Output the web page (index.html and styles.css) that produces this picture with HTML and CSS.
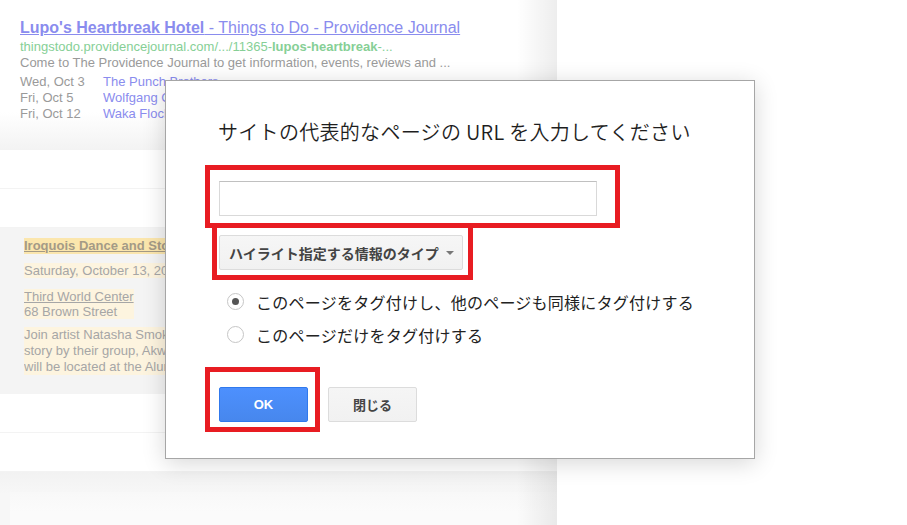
FILE: index.html
```html
<!DOCTYPE html>
<html lang="ja">
<head>
<meta charset="utf-8">
<title>URL</title>
<link rel="stylesheet" href="styles.css">
</head>
<body>
<div class="page">
  <div class="column">
    <div class="result">
      <a class="result-title"><b>Lupo's Heartbreak Hotel</b> - Things to Do - Providence Journal</a>
      <div class="result-url">thingstodo.providencejournal.com/.../11365-<b>lupos-heartbreak</b>-...</div>
      <div class="result-snippet">Come to The Providence Journal to get information, events, reviews and ...</div>
      <div class="events">
        <div class="ev"><span class="ev-date">Wed, Oct 3</span><a class="ev-name">The Punch Brothers</a></div>
        <div class="ev"><span class="ev-date">Fri, Oct 5</span><a class="ev-name ev-clip">Wolfgang Gartner</a></div>
        <div class="ev"><span class="ev-date">Fri, Oct 12</span><a class="ev-name ev-clip">Waka Flocka</a></div>
      </div>
    </div>
    <div class="blank"></div>
    <div class="blank"></div>
    <div class="event-card">
      <div class="clip"><span class="hl hl-strong ev-title">Iroquois Dance and Story</span></div>
      <div class="clip ev-line"><span class="hl">Saturday, October 13, 2012</span></div>
      <div class="clip ev-addr"><span class="hl"><u>Third World Center</u><br>68 Brown Street</span></div>
      <div class="clip ev-para"><span class="hl hl-block">Join artist Natasha Smoke<br>story by their group, Akwesasne<br>will be located at the Alumnae</span></div>
    </div>
    <div class="blank"></div>
    <div class="blank"></div>
    <div class="footer"><div class="footer-card"></div></div>
  </div>
</div>

<div class="dialog">
  <h1 class="dialog-title">サイトの代表的なページの URL を入力してください</h1>
  <div class="mark mark-input">
    <input class="url-input" type="text">
  </div>
  <div class="mark mark-select">
    <button class="select" type="button">ハイライト指定する情報のタイプ<span class="caret"></span></button>
  </div>
  <div class="options">
    <label class="option"><span class="radio checked"></span>このページをタグ付けし、他のページも同様にタグ付けする</label>
    <label class="option"><span class="radio"></span>このページだけをタグ付けする</label>
  </div>
  <div class="actions">
    <div class="mark mark-ok"><button class="btn btn-ok" type="button">OK</button></div>
    <button class="btn btn-close" type="button">閉じる</button>
  </div>
</div>
</body>
</html>
```
FILE: styles.css
```css
html, body {
  margin: 0;
  padding: 0;
  background: #fff;
}
body {
  position: relative;
  width: 907px;
  height: 525px;
  overflow: hidden;
  font-family: "Liberation Sans", Arial, sans-serif;
}

.page {
  display: flex;
}
.column {
  position: relative;
  width: 557px;
  height: 525px;
  display: flex;
  flex-direction: column;
}
.column::after {
  content: "";
  position: absolute;
  top: 0;
  right: 0;
  bottom: 0;
  width: 40px;
  background: linear-gradient(to right, rgba(0,0,0,0), rgba(0,0,0,0.07));
  pointer-events: none;
}

.result {
  height: 150px;
  box-sizing: border-box;
  padding: 18px 0 0 20px;
  background: linear-gradient(to bottom, #fff 0, #fff 112px, #f3f3f3 150px);
}
.result-title {
  display: block;
  font-size: 16px;
  line-height: 19px;
  color: #8a8cee;
  text-decoration: underline;
  white-space: nowrap;
}
.result-url {
  margin-top: 2px;
  font-size: 13px;
  line-height: 16px;
  color: #86cf96;
  white-space: nowrap;
}
.result-snippet {
  font-size: 13px;
  line-height: 16px;
  color: #9a9a9a;
  white-space: nowrap;
}
.events {
  margin-top: 3px;
}
.ev {
  display: flex;
  font-size: 13px;
  line-height: 16px;
  white-space: nowrap;
}
.ev-date {
  width: 83px;
  color: #9a9a9a;
}
.ev-name {
  color: #8a8cee;
}
.ev-clip {
  display: block;
  max-width: 62px;
  overflow: hidden;
}

.blank {
  height: 38px;
  border-bottom: 1px solid #f3f3f3;
  background: #fff;
}

.event-card {
  height: 166px;
  box-sizing: border-box;
  padding: 10px 0 0 24px;
  background: #f4f4f4;
  font-size: 13px;
  color: #a6a6a6;
  white-space: nowrap;
}
.clip {
  max-width: 141px;
  overflow: hidden;
}
.hl {
  display: inline-block;
  vertical-align: top;
  background: #fdf4df;
  line-height: 15px;
}
.hl-strong {
  background: #fbe6ad;
  line-height: 16px;
}
.ev-title {
  font-weight: bold;
  color: #a49a86;
  text-decoration: underline;
}
.ev-line {
  margin-top: 9px;
}
.ev-addr {
  margin-top: 11px;
}
.ev-addr u {
  text-decoration: underline;
}
.ev-para {
  margin-top: 8px;
}
.hl-block {
  line-height: 16px;
}

.footer {
  flex: 1;
  background: linear-gradient(to bottom, #f2f2f2, #f7f7f7 22px);
  padding: 20px 0 0 10px;
}
.footer-card {
  height: 100%;
  background: linear-gradient(to bottom, #f8f8f8, #fbfbfb 20px);
}

/* dialog */
.dialog {
  position: absolute;
  left: 165px;
  top: 80px;
  width: 590px;
  height: 379px;
  box-sizing: border-box;
  background: #fff;
  border: 1px solid #a6a6a6;
  box-shadow: 0 4px 22px rgba(0,0,0,0.16);
  font-family: "Noto Sans CJK JP", "Liberation Sans", sans-serif;
  color: #222;
  display: flex;
  flex-direction: column;
  align-items: flex-start;
}
.dialog-title {
  margin: 37px 0 0 52px;
  font-size: 20px;
  line-height: 28px;
  font-weight: 350;
  letter-spacing: 0.3px;
  color: #1e1e1e;
  white-space: nowrap;
}
.mark {
  box-sizing: border-box;
  border: 5px solid #e81c22;
}
.mark-input {
  margin: 19px 0 0 39px;
  width: 415px;
  height: 63px;
  padding: 11px 0 0 9px;
}
.url-input {
  display: block;
  box-sizing: border-box;
  width: 378px;
  height: 35px;
  margin: 0;
  border: 1px solid #d9d9d9;
  border-top-color: #c0c0c0;
  background: #fff;
  outline: none;
}
.mark-select {
  margin: 0 0 0 46px;
  width: 261px;
  height: 52px;
  border-top: none;
  padding: 7px 0 0 2px;
}
.select {
  display: flex;
  align-items: center;
  box-sizing: border-box;
  width: 244px;
  height: 35px;
  margin: 0;
  padding: 0 0 0 9px;
  border: 1px solid #dcdcdc;
  border-radius: 2px;
  background: linear-gradient(to bottom, #f6f6f6, #f1f1f1);
  font-family: "Noto Sans CJK JP", sans-serif;
  font-size: 14px;
  font-weight: bold;
  color: #444;
  white-space: nowrap;
}
.caret {
  margin-left: 7px;
  width: 0;
  height: 0;
  border-left: 4px solid transparent;
  border-right: 4px solid transparent;
  border-top: 4px solid #777;
}

.options {
  margin: 5px 0 0 61px;
  display: flex;
  flex-direction: column;
}
.option {
  display: flex;
  align-items: center;
  height: 33px;
  font-size: 16px;
  letter-spacing: 0.25px;
  color: #222;
  white-space: nowrap;
}
.radio {
  box-sizing: border-box;
  width: 17px;
  height: 17px;
  margin-right: 12px;
  border: 1px solid #c6c6c6;
  border-radius: 50%;
  background: #fff;
  display: flex;
  align-items: center;
  justify-content: center;
}
.radio.checked::after {
  content: "";
  width: 7px;
  height: 7px;
  border-radius: 50%;
  background: #555;
}

.actions {
  margin: 16px 0 0 39px;
  display: flex;
  align-items: flex-start;
}
.mark-ok {
  width: 115px;
  height: 65px;
  padding: 15px 0 0 9px;
}
.btn {
  box-sizing: border-box;
  height: 35px;
  width: 89px;
  margin: 0;
  border-radius: 2px;
  font-size: 13px;
  font-weight: bold;
  padding: 0;
}
.btn-ok {
  display: block;
  background: linear-gradient(to bottom, #4d90fe, #4787ed);
  border: 1px solid #3079ed;
  color: #fff;
  font-family: "Liberation Sans", Arial, sans-serif;
}
.btn-close {
  margin: 20px 0 0 8px;
  background: linear-gradient(to bottom, #f5f5f5, #f1f1f1);
  border: 1px solid #dcdcdc;
  color: #444;
  font-family: "Noto Sans CJK JP", sans-serif;
}
```
